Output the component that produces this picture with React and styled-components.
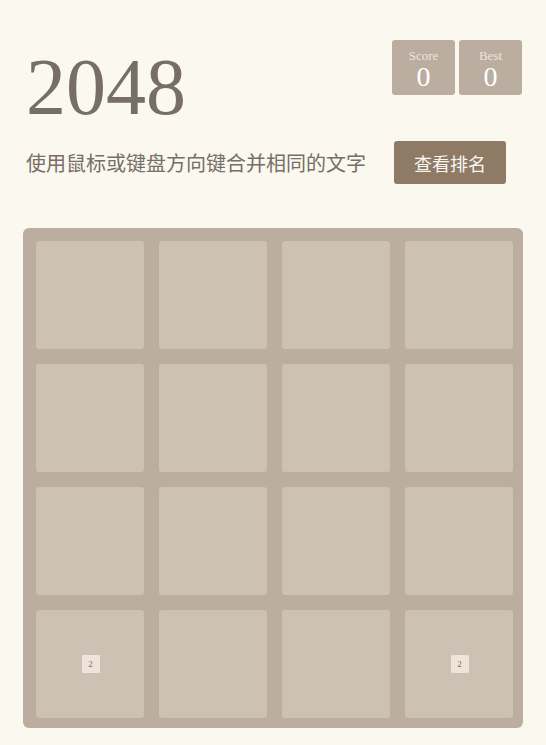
import React from "react";
import styled, { createGlobalStyle } from "styled-components";

const GlobalStyle = createGlobalStyle`
  html, body {
    margin: 0;
    padding: 0;
    background: #faf8ef;
  }
  body {
    font-family: "Liberation Serif", "Noto Sans CJK SC", serif;
    color: #776e65;
  }
`;

const cells = [
  0, 0, 0, 0,
  0, 0, 0, 0,
  0, 0, 0, 0,
  2, 0, 0, 2,
];

export default function App() {
  return (
    <>
      <GlobalStyle />
      <Container>
        <Heading>
          <Title>2048</Title>
          <Scores>
            <ScoreBox>
              <ScoreLabel>Score</ScoreLabel>
              <ScoreValue>0</ScoreValue>
            </ScoreBox>
            <ScoreBox>
              <ScoreLabel>Best</ScoreLabel>
              <ScoreValue>0</ScoreValue>
            </ScoreBox>
          </Scores>
        </Heading>
        <Intro>
          <IntroText>使用鼠标或键盘方向键合并相同的文字</IntroText>
          <RankButton>查看排名</RankButton>
        </Intro>
        <Board>
          {cells.map((v, i) => (
            <Cell key={i}>{v > 0 && <Tile>{v}</Tile>}</Cell>
          ))}
        </Board>
      </Container>
    </>
  );
}

const Container = styled.div`
  width: 500px;
  margin: 0 auto;
  padding-top: 40px;
`;

const Heading = styled.div`
  display: flex;
  justify-content: space-between;
  align-items: flex-start;
  padding-left: 3px;
`;

const Title = styled.h1`
  margin: 0;
  font-family: "Liberation Serif", serif;
  font-weight: normal;
  font-size: 80px;
  line-height: 94px;
  color: #776e65;
`;

const Scores = styled.div`
  display: flex;
  gap: 4px;
  margin-right: 1px;
`;

const ScoreBox = styled.div`
  width: 63px;
  height: 55px;
  background: #bbada0;
  border-radius: 3px;
  display: flex;
  flex-direction: column;
  align-items: center;
  padding-top: 9px;
  box-sizing: border-box;
`;

const ScoreLabel = styled.div`
  font-size: 13px;
  line-height: 14px;
  color: #eee4da;
`;

const ScoreValue = styled.div`
  font-size: 28px;
  line-height: 28px;
  color: #ffffff;
`;

const Intro = styled.div`
  display: flex;
  justify-content: space-between;
  align-items: center;
  margin-top: 7px;
  padding-left: 3px;
  padding-right: 17px;
`;

const IntroText = styled.p`
  margin: 0;
  font-family: "Noto Sans CJK SC", sans-serif;
  font-size: 20px;
  color: #776e65;
`;

const RankButton = styled.button`
  width: 112px;
  height: 43px;
  border: none;
  border-radius: 3px;
  background: #8f7a66;
  color: #f9f6f2;
  font-family: "Noto Sans CJK SC", sans-serif;
  font-size: 18px;
  padding: 0;
`;

const Board = styled.div`
  margin-top: 44px;
  width: 500px;
  height: 500px;
  box-sizing: border-box;
  padding: 13px 10px 10px 13px;
  background: #bbada0;
  border-radius: 6px;
  display: grid;
  grid-template-columns: repeat(4, 108px);
  grid-template-rows: repeat(4, 108px);
  gap: 15px;
`;

const Cell = styled.div`
  background: #cdc1b4;
  border-radius: 3px;
  display: flex;
  align-items: center;
  justify-content: center;
`;

const Tile = styled.div`
  width: 18px;
  height: 18px;
  background: #eee4da;
  border-radius: 1px;
  font-size: 9px;
  line-height: 18px;
  text-align: center;
  color: #776e65;
  margin-left: 1px;
`;
